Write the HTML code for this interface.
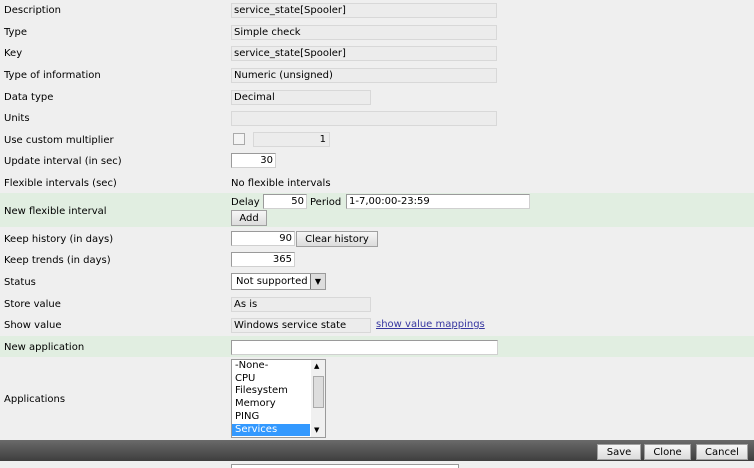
<!DOCTYPE html>
<html><head><style>
html,body{margin:0;width:754px;height:468px;overflow:hidden}
body{background:#efefef;font-family:"DejaVu Sans","Liberation Sans",sans-serif;font-size:10px;color:#000;position:relative}
.a{position:absolute;white-space:nowrap}
.l{left:4px}
.ro{position:absolute;background:#ececec;border:1px solid #d8d8d8;height:13px;line-height:14px;padding-left:2px}
.in{position:absolute;background:#fff;border:1px solid #9a9a9a;border-right-color:#d0d0d0;border-bottom-color:#d0d0d0;height:13px;line-height:14px;padding:0 2px;text-align:right}
.btn{position:absolute;background:linear-gradient(#f6f6f6,#dcdcdc);border:1px solid #a0a0a0;text-align:center;line-height:15px;height:14px}
.band{position:absolute;left:0;width:754px;background:#e1eee1}
</style></head><body>
<div class="band" style="top:193px;height:34px"></div>
<div class="band" style="top:336px;height:21px"></div>
<div class="a l" style="top:5px">Description</div>
<div class="a l" style="top:27px">Type</div>
<div class="a l" style="top:48px">Key</div>
<div class="a l" style="top:70px">Type of information</div>
<div class="a l" style="top:92px">Data type</div>
<div class="a l" style="top:113px">Units</div>
<div class="a l" style="top:135px">Use custom multiplier</div>
<div class="a l" style="top:156px">Update interval (in sec)</div>
<div class="a l" style="top:178px">Flexible intervals (sec)</div>
<div class="a l" style="top:206px">New flexible interval</div>
<div class="a l" style="top:234px">Keep history (in days)</div>
<div class="a l" style="top:255px">Keep trends (in days)</div>
<div class="a l" style="top:277px">Status</div>
<div class="a l" style="top:299px">Store value</div>
<div class="a l" style="top:320px">Show value</div>
<div class="a l" style="top:342px">New application</div>
<div class="a l" style="top:394px">Applications</div>

<div class="ro" style="left:231px;top:3px;width:262px">service_state[Spooler]</div>
<div class="ro" style="left:231px;top:25px;width:262px">Simple check</div>
<div class="ro" style="left:231px;top:46px;width:262px">service_state[Spooler]</div>
<div class="ro" style="left:231px;top:68px;width:262px">Numeric (unsigned)</div>
<div class="ro" style="left:231px;top:90px;width:136px">Decimal</div>
<div class="ro" style="left:231px;top:111px;width:262px"></div>
<div class="a" style="left:233px;top:133px;width:10px;height:10px;background:#f4f4f4;border:1px solid #aaa"></div>
<div class="ro" style="left:253px;top:132px;width:70px;text-align:right;padding-right:3px">1</div>
<div class="in" style="left:231px;top:153px;width:39px">30</div>
<div class="a" style="left:231px;top:178px">No flexible intervals</div>
<div class="a" style="left:231px;top:197px">Delay</div>
<div class="in" style="left:263px;top:194px;width:38px">50</div>
<div class="a" style="left:310px;top:197px">Period</div>
<div class="in" style="left:346px;top:194px;width:178px;text-align:left">1-7,00:00-23:59</div>
<div class="btn" style="left:231px;top:210px;width:34px">Add</div>
<div class="in" style="left:231px;top:231px;width:58px">90</div>
<div class="btn" style="left:296px;top:231px;width:80px">Clear history</div>
<div class="in" style="left:231px;top:252px;width:58px">365</div>
<div class="a" style="left:231px;top:273px;width:93px;height:15px;background:#fff;border:1px solid #9a9a9a;line-height:16px"><span style="padding-left:4px">Not supported</span><div style="position:absolute;right:0;top:0;width:14px;height:15px;background:#ddd;border-left:1px solid #777;font-size:8px;text-align:center">▼</div></div>
<div class="ro" style="left:231px;top:297px;width:136px">As is</div>
<div class="ro" style="left:231px;top:318px;width:136px">Windows service state</div>
<div class="a" style="left:376px;top:319px;color:#3636a0;text-decoration:underline">show value mappings</div>
<div class="in" style="left:231px;top:340px;width:261px"></div>
<div class="a" style="left:231px;top:359px;width:93px;height:77px;background:#fff;border:1px solid #9a9a9a;line-height:12.7px;overflow:hidden">
<div style="padding-left:3px">-None-</div><div style="padding-left:3px">CPU</div><div style="padding-left:3px">Filesystem</div><div style="padding-left:3px">Memory</div><div style="padding-left:3px">PING</div><div style="padding-left:3px;background:#3399ff;color:#fff;width:75px">Services</div>
<div style="position:absolute;right:0;top:0;width:14px;height:77px;background:#f0f0f0"><div style="position:absolute;left:2px;top:16px;width:9px;height:30px;background:#ddd;border:1px solid #aaa"></div><div style="position:absolute;top:0;left:3px;font-size:7px">▲</div><div style="position:absolute;bottom:0;left:3px;font-size:7px">▼</div></div>
</div>
<div class="a" style="left:0;top:440px;width:754px;height:21px;background:linear-gradient(#6a6a6a,#3e3e3e)"></div>
<div class="btn" style="left:597px;top:444px;width:42px">Save</div>
<div class="btn" style="left:644px;top:444px;width:45px">Clone</div>
<div class="btn" style="left:696px;top:444px;width:50px">Cancel</div>
<div class="a" style="left:231px;top:464px;width:226px;height:4px;background:#fff;border:1px solid #999;border-bottom:none"></div>
</body></html>
